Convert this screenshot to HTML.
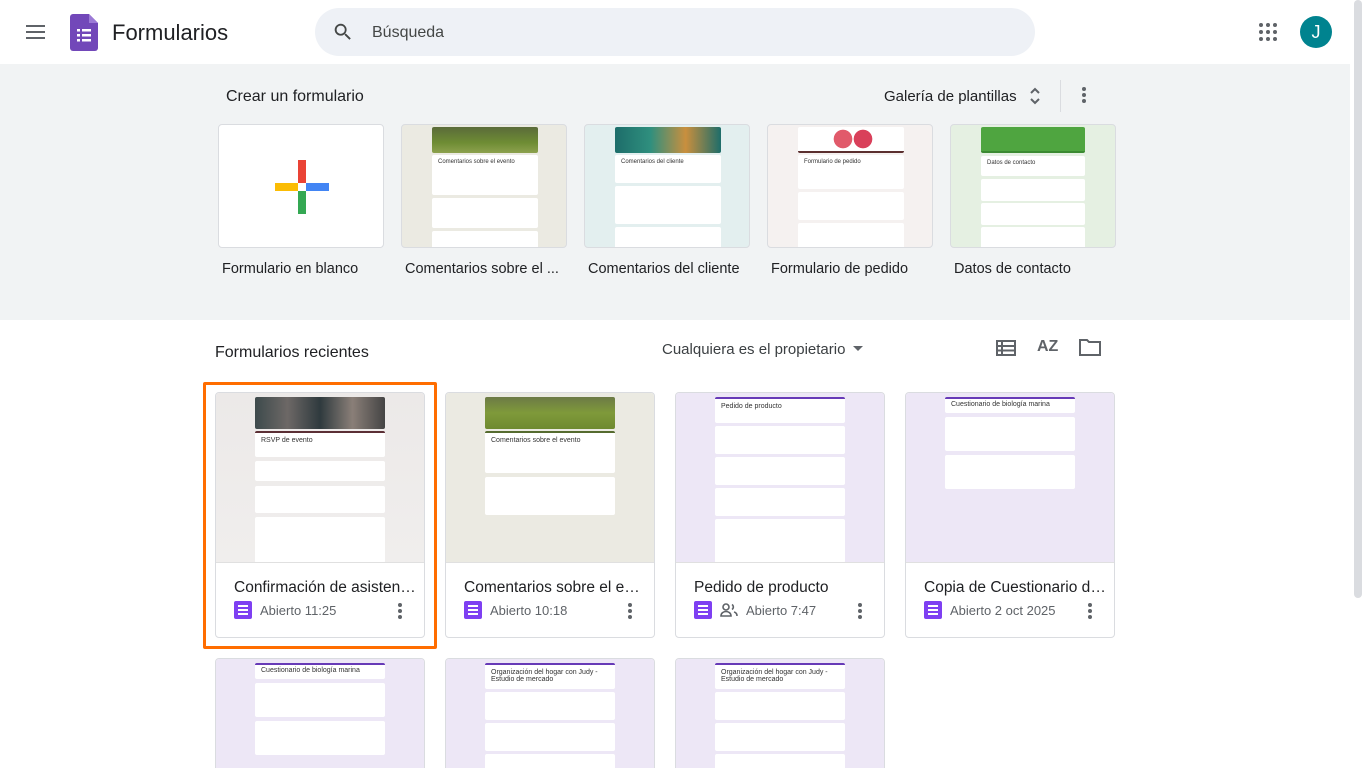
<!DOCTYPE html>
<html><head><meta charset="utf-8"><style>
*{box-sizing:border-box;margin:0;padding:0}
html,body{width:1366px;height:768px;overflow:hidden}
body{background:#fff;font-family:"Liberation Sans",Arial,sans-serif;color:#202124;position:relative}
.abs{position:absolute}
.hdr{left:0;top:0;width:1350px;height:64px;background:#fff}
.gray{left:0;top:64px;width:1350px;height:256px;background:#f1f3f4}
.sb{left:1354px;top:0;width:8px;height:598px;background:#dadce0;border-radius:4px}
.search{left:315px;top:8px;width:720px;height:48px;background:#eef1f6;border-radius:24px}
.tpl{width:166px;height:124px;border:1px solid #dadce0;border-radius:4px;background:#fff;overflow:hidden;top:124px}
.tlabel{top:260px;font-size:14.5px;color:#202124;width:170px;white-space:nowrap;overflow:hidden}
.card{width:210px;height:246px;border:1px solid #dadce0;border-radius:4px;background:#fff;overflow:hidden}
.thumb{position:absolute;left:0;top:0;width:208px;height:170px;border-bottom:1px solid #e0e0e0;overflow:hidden}
.paper{position:absolute;left:39px;width:130px;background:#fff;border-radius:2px}
.ct{position:absolute;left:18px;top:186px;font-size:15.5px;color:#202124;white-space:nowrap;width:182px;overflow:hidden;text-overflow:ellipsis}
.meta{position:absolute;left:18px;top:208px;font-size:13px;color:#5f6368;display:flex;align-items:center;gap:8px}
.ficon{width:18px;height:18px;background:#7e3ff2;border-radius:2px;position:relative}
.ficon i{position:absolute;left:4px;height:2px;width:10px;background:#fff}
.kb{position:absolute;right:22px;top:210px;width:4px}
.kb b{display:block;width:4px;height:4px;border-radius:50%;background:#5f6368;margin-bottom:2px}
.tx{font-size:6px;color:#333;padding:4px 6px}
</style></head><body>
<div class="abs hdr"></div>
<div class="abs" style="left:26px;top:25px;width:19px;height:2px;background:#5f6368;box-shadow:0 6px 0 #5f6368,0 12px 0 #5f6368"></div>
<svg class="abs" style="left:70px;top:14px" width="28" height="37" viewBox="0 0 28 37"><path d="M3 0h16l9 9v25a3 3 0 0 1-3 3H3a3 3 0 0 1-3-3V3a3 3 0 0 1 3-3z" fill="#7248b9"/><path d="M19 0l9 9h-9z" fill="#9c7ad6"/><g fill="#fff"><rect x="7" y="15" width="3" height="2.5"/><rect x="12" y="15" width="9" height="2.5"/><rect x="7" y="20" width="3" height="2.5"/><rect x="12" y="20" width="9" height="2.5"/><rect x="7" y="25" width="3" height="2.5"/><rect x="12" y="25" width="9" height="2.5"/></g></svg>
<div class="abs" style="left:112px;top:20px;font-size:22px;color:#202124">Formularios</div>
<div class="abs search"></div>
<svg class="abs" style="left:332px;top:21px" width="22" height="22" viewBox="0 0 24 24"><path d="M15.5 14h-.8l-.3-.3A6.5 6.5 0 1 0 9.5 16a6.5 6.5 0 0 0 4.2-1.6l.3.3v.8l5 5 1.5-1.5-5-5zm-6 0a4.5 4.5 0 1 1 0-9 4.5 4.5 0 0 1 0 9z" fill="#444746"/></svg>
<div class="abs" style="left:372px;top:24px;font-size:16px;color:#444746">Búsqueda</div>
<svg class="abs" style="left:1259px;top:23px" width="18" height="18" viewBox="0 0 18 18" fill="#5f6368"><circle cx="2" cy="2" r="2"/><circle cx="9" cy="2" r="2"/><circle cx="16" cy="2" r="2"/><circle cx="2" cy="9" r="2"/><circle cx="9" cy="9" r="2"/><circle cx="16" cy="9" r="2"/><circle cx="2" cy="16" r="2"/><circle cx="9" cy="16" r="2"/><circle cx="16" cy="16" r="2"/></svg>
<div class="abs" style="left:1300px;top:16px;width:32px;height:32px;border-radius:50%;background:#00838f;color:#fff;font-size:18px;text-align:center;line-height:32px">J</div>
<div class="abs sb"></div>

<div class="abs gray"></div>
<div class="abs" style="left:226px;top:88px;font-size:16px">Crear un formulario</div>
<div class="abs" style="left:884px;top:88px;font-size:15px;color:#202124">Galería de plantillas</div>
<svg class="abs" style="left:1028px;top:86px" width="14" height="20" viewBox="0 0 14 20"><path d="M3 7l4-4 4 4M3 13l4 4 4-4" stroke="#5f6368" stroke-width="2" fill="none"/></svg>
<div class="abs" style="left:1060px;top:80px;width:1px;height:32px;background:#dadce0"></div>
<div class="abs" style="left:1082px;top:87px;width:4px"><div style="width:4px;height:4px;border-radius:50%;background:#5f6368;box-shadow:0 6px 0 #5f6368,0 12px 0 #5f6368"></div></div>

<div class="abs tpl" style="left:218px"><svg style="position:absolute;left:56px;top:35px" width="54" height="54"><rect x="23" y="0" width="8" height="23" fill="#ea4335"/><rect x="31" y="23" width="23" height="8" fill="#4285f4"/><rect x="23" y="31" width="8" height="23" fill="#34a853"/><rect x="0" y="23" width="23" height="8" fill="#fbbc04"/></svg></div>
<div class="abs tpl" style="left:401px;background:#ebeae2"><div class="paper" style="left:30px;top:2px;width:106px;height:26px;background:linear-gradient(#5a6b3a,#6e8c34 60%,#8da14e)"></div><div class="paper" style="left:30px;top:30px;width:106px;height:40px"><div class="tx">Comentarios sobre el evento</div></div><div class="paper" style="left:30px;top:73px;width:106px;height:30px"></div><div class="paper" style="left:30px;top:106px;width:106px;height:20px"></div></div>
<div class="abs tpl" style="left:584px;background:#e3efef"><div class="paper" style="left:30px;top:2px;width:106px;height:26px;background:linear-gradient(90deg,#1d6d6a,#2f8f7e,#c98f3e,#1d6d6a)"></div><div class="paper" style="left:30px;top:30px;width:106px;height:28px"><div class="tx">Comentarios del cliente</div></div><div class="paper" style="left:30px;top:61px;width:106px;height:38px"></div><div class="paper" style="left:30px;top:102px;width:106px;height:22px"></div></div>
<div class="abs tpl" style="left:767px;background:#f5f1f0"><div class="paper" style="left:30px;top:2px;width:106px;height:26px;background:#fff;border-bottom:2px solid #5b2f2f"></div><div class="abs" style="left:60px;top:4px;width:50px;height:20px;background:radial-gradient(circle at 30% 50%,#e15a6a 25%,transparent 26%),radial-gradient(circle at 70% 50%,#d9405a 25%,transparent 26%)"></div><div class="paper" style="left:30px;top:30px;width:106px;height:34px"><div class="tx">Formulario de pedido</div></div><div class="paper" style="left:30px;top:67px;width:106px;height:28px"></div><div class="paper" style="left:30px;top:98px;width:106px;height:26px"></div></div>
<div class="abs tpl" style="left:950px;background:#e5f0e2"><div class="paper" style="left:30px;top:2px;width:104px;height:26px;background:#4fa540;border-bottom:2px solid #3b8a32"></div><div class="paper" style="left:30px;top:31px;width:104px;height:20px"><div class="tx">Datos de contacto</div></div><div class="paper" style="left:30px;top:54px;width:104px;height:22px"></div><div class="paper" style="left:30px;top:78px;width:104px;height:22px"></div><div class="paper" style="left:30px;top:102px;width:104px;height:22px"></div></div>
<div class="abs tlabel" style="left:222px;top:261px">Formulario en blanco</div>
<div class="abs tlabel" style="left:405px;width:156px;top:261px">Comentarios sobre el ...</div>
<div class="abs tlabel" style="left:588px;top:261px">Comentarios del cliente</div>
<div class="abs tlabel" style="left:771px;top:261px">Formulario de pedido</div>
<div class="abs tlabel" style="left:954px;top:261px">Datos de contacto</div>

<div class="abs" style="left:215px;top:344px;font-size:16px">Formularios recientes</div>
<div class="abs" style="left:662px;top:341px;font-size:15px;color:#3c4043">Cualquiera es el propietario</div>
<svg class="abs" style="left:852px;top:345px" width="12" height="8"><path d="M1 1l5 5 5-5z" fill="#5f6368"/></svg>
<svg class="abs" style="left:996px;top:340px" width="20" height="16" viewBox="0 0 20 16" fill="#5f6368"><path d="M0 0h20v16H0zM2 2v3h3V2zm5 0v3h11V2zM2 7v2.5h3V7zm5 0v2.5h11V7zM2 11.5V14h3v-2.5zm5 0V14h11v-2.5z"/></svg>
<div class="abs" style="left:1037px;top:338px;font-size:16px;font-weight:bold;color:#5f6368">AZ</div>
<svg class="abs" style="left:1079px;top:339px" width="22" height="17" viewBox="0 0 22 17"><path d="M1 1h7l2 2h11v13H1z" fill="none" stroke="#5f6368" stroke-width="2"/></svg>

<div class="abs" style="left:203px;top:382px;width:234px;height:267px;border:3px solid #ff6d00;border-radius:2px"></div>

<div class="abs card" style="left:215px;top:392px"><div class="thumb" style="background:linear-gradient(#ece9e8,#f0eeed)"><div class="paper" style="top:4px;height:32px;background:linear-gradient(90deg,#3d4a4c,#6d6866,#2f3a3e,#8a7f78,#444)"></div><div class="paper" style="top:38px;height:26px;border-top:2px solid #5b2f35"><div class="tx" style="font-size:7px">RSVP de evento</div></div><div class="paper" style="top:68px;height:20px"></div><div class="paper" style="top:93px;height:27px"></div><div class="paper" style="top:124px;height:46px"></div></div><div class="ct">Confirmación de asistencia</div><div class="meta"><div class="ficon"><i style="top:4px"></i><i style="top:8px"></i><i style="top:12px"></i></div>Abierto 11:25</div><div class="kb"><b></b><b></b><b></b></div></div>
<div class="abs card" style="left:445px;top:392px"><div class="thumb" style="background:#ebeae2"><div class="paper" style="top:4px;height:32px;background:linear-gradient(#6c7a46,#7f9a3a 50%,#6e8a30)"></div><div class="paper" style="top:38px;height:42px;border-top:2px solid #556b2f"><div class="tx" style="font-size:7px">Comentarios sobre el evento</div></div><div class="paper" style="top:84px;height:38px"></div></div><div class="ct">Comentarios sobre el evento</div><div class="meta"><div class="ficon"><i style="top:4px"></i><i style="top:8px"></i><i style="top:12px"></i></div>Abierto 10:18</div><div class="kb"><b></b><b></b><b></b></div></div>
<div class="abs card" style="left:675px;top:392px"><div class="thumb" style="background:#ede7f6"><div class="paper" style="top:4px;height:26px;border-top:2px solid #673ab7"><div class="tx" style="font-size:7px">Pedido de producto</div></div><div class="paper" style="top:33px;height:28px"></div><div class="paper" style="top:64px;height:28px"></div><div class="paper" style="top:95px;height:28px"></div><div class="paper" style="top:126px;height:44px"></div></div><div class="ct">Pedido de producto</div><div class="meta"><div class="ficon"><i style="top:4px"></i><i style="top:8px"></i><i style="top:12px"></i></div><svg width="18" height="14" viewBox="0 0 18 14"><circle cx="6" cy="4" r="3" fill="none" stroke="#5f6368" stroke-width="1.6"/><path d="M1 13c0-3 2.5-4.5 5-4.5s5 1.5 5 4.5z" fill="none" stroke="#5f6368" stroke-width="1.6"/><path d="M12 1.5a3 3 0 0 1 0 5M14 9c2 .5 3 2 3 4" fill="none" stroke="#5f6368" stroke-width="1.6"/></svg>Abierto 7:47</div><div class="kb"><b></b><b></b><b></b></div></div>
<div class="abs card" style="left:905px;top:392px"><div class="thumb" style="background:#ede7f6"><div class="paper" style="top:4px;height:16px;border-top:2px solid #673ab7"><div class="tx" style="font-size:7px;padding-top:2px">Cuestionario de biología marina</div></div><div class="paper" style="top:24px;height:34px"></div><div class="paper" style="top:62px;height:34px"></div></div><div class="ct">Copia de Cuestionario de biología</div><div class="meta"><div class="ficon"><i style="top:4px"></i><i style="top:8px"></i><i style="top:12px"></i></div>Abierto 2 oct 2025</div><div class="kb"><b></b><b></b><b></b></div></div>
<div class="abs card" style="left:215px;top:658px"><div class="thumb" style="background:#ede7f6"><div class="paper" style="top:4px;height:16px;border-top:2px solid #673ab7"><div class="tx" style="font-size:7px;padding-top:2px">Cuestionario de biología marina</div></div><div class="paper" style="top:24px;height:34px"></div><div class="paper" style="top:62px;height:34px"></div></div></div>
<div class="abs card" style="left:445px;top:658px"><div class="thumb" style="background:#ede7f6"><div class="paper" style="top:4px;height:26px;border-top:2px solid #673ab7"><div class="tx" style="font-size:7px">Organización del hogar con Judy - Estudio de mercado</div></div><div class="paper" style="top:33px;height:28px"></div><div class="paper" style="top:64px;height:28px"></div><div class="paper" style="top:95px;height:28px"></div></div></div>
<div class="abs card" style="left:675px;top:658px"><div class="thumb" style="background:#ede7f6"><div class="paper" style="top:4px;height:26px;border-top:2px solid #673ab7"><div class="tx" style="font-size:7px">Organización del hogar con Judy - Estudio de mercado</div></div><div class="paper" style="top:33px;height:28px"></div><div class="paper" style="top:64px;height:28px"></div><div class="paper" style="top:95px;height:28px"></div></div></div>
</body></html>
